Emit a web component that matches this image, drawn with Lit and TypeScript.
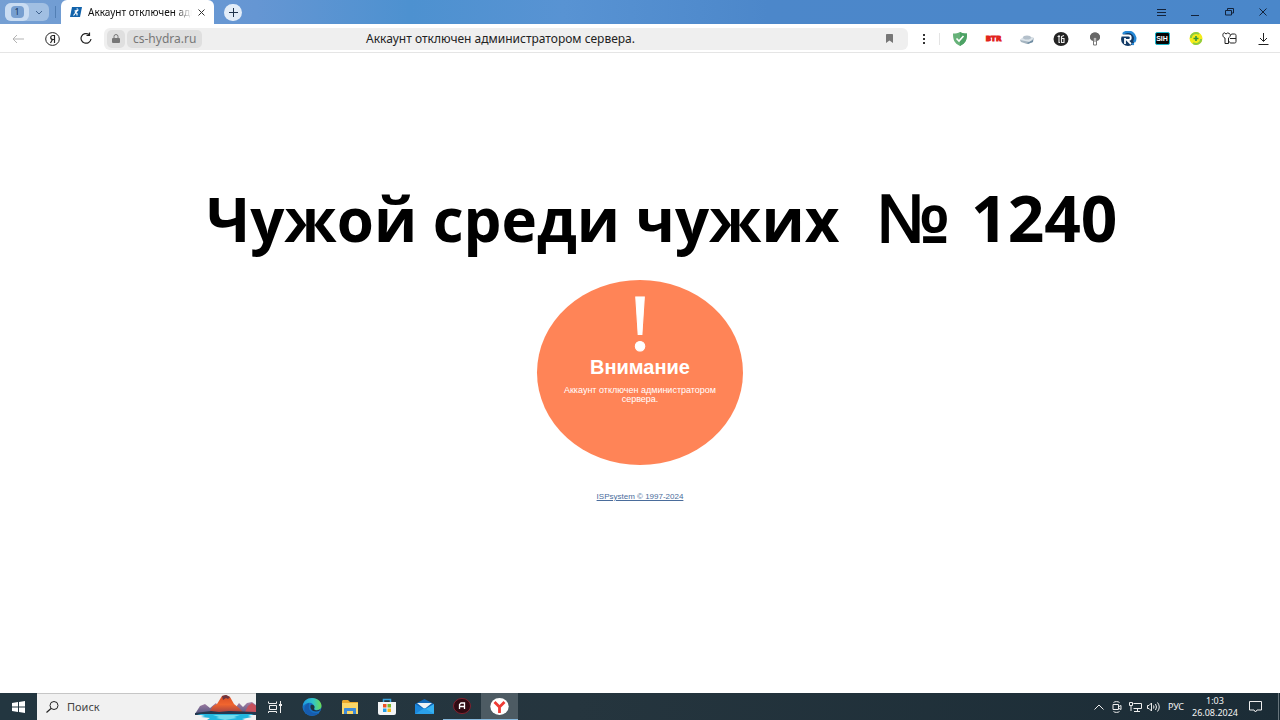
import { LitElement, html, css, svg, type TemplateResult } from "lit";
import { customElement } from "lit/decorators.js";

const icon = (w: number, h: number, body: TemplateResult | ReturnType<typeof svg>) =>
  html`<svg width=${w} height=${h} viewBox="0 0 ${w} ${h}" fill="none" aria-hidden="true">${body}</svg>`;

const reset = css`
  * { box-sizing: border-box; }
  button {
    appearance: none;
    border: 0;
    margin: 0;
    padding: 0;
    background: none;
    color: inherit;
    font: inherit;
    display: flex;
    align-items: center;
    justify-content: center;
  }
  svg { display: block; flex: none; }
`;

@customElement("tab-strip")
class TabStrip extends LitElement {
  static styles = [reset, css`
    :host {
      display: flex;
      height: 24px;
      padding-left: 5px;
      background: linear-gradient(90deg, #759fd3 0%, #6596d3 20%, #4d91d0 32%, #5893d3 44%, #4c87ca 60%, #4a87ca 100%);
      font: 10px/14px "Noto Sans", sans-serif;
      color: #111;
    }
    .group { display: flex; align-items: center; margin: 3px 6px 3px 0; width: 44px; border-radius: 6px; background: #a1bfe2; color: #27496f; }
    .count { width: 24px; height: 18px; border-radius: 6px; background: #c9dcf2; }
    .badge { width: 13px; height: 12px; border-radius: 4px; background: #779fd0; font-size: 9px; line-height: 12px; color: #16365c; }
    .more { flex: 1; height: 18px; }
    .split { width: 1px; height: 12px; margin: 6px 5px 0 0; background: #527fb4; }
    .tab { display: flex; align-items: center; gap: 6px; width: 153px; padding: 0 9px; border-radius: 6px 6px 0 0; background: #fff; }
    .name { flex: 1; min-width: 0; white-space: nowrap; -webkit-mask-image: linear-gradient(90deg, #000 84%, transparent); mask-image: linear-gradient(90deg, #000 84%, transparent); }
    .add { align-self: center; width: 18px; height: 17px; margin-left: 10px; border-radius: 9px; background: #e3edf8; }
    .controls { display: flex; margin-left: auto; }
    .controls button { width: 34px; }
  `];
  render() {
    return html`
      <div class="group">
        <button class="count" aria-label="Вкладки"><span class="badge">1</span></button>
        <button class="more" aria-label="Группы">${icon(8, 5, svg`<path d="M1 1l3 3 3-3" stroke="#41648f"/>`)}</button>
      </div>
      <span class="split"></span>
      <div class="tab">
        ${icon(12, 10, svg`<path d="M2 0h10l-2 10H0z" fill="#1263ab"/><path d="M6.500 2h1.500M4.500 4l3-.5-2 2 1.500 1v2M5.500 6L3.500 8.500" stroke="#fff" stroke-width="1.200"/>`)}
        <span class="name">Аккаунт отключен адм</span>
        <button class="close" aria-label="Закрыть">${icon(7, 7, svg`<path d="M.5.5l6 6M6.500.5l-6 6" stroke="#333"/>`)}</button>
      </div>
      <button class="add" aria-label="Новая вкладка">${icon(9, 9, svg`<path d="M4.500 0v9M0 4.500h9" stroke="#20344c"/>`)}</button>
      <div class="controls">
        <button aria-label="Меню">${icon(9, 7, svg`<path d="M0 .5h9M0 3.500h9M0 6.500h9" stroke="#13233b"/>`)}</button>
        <button aria-label="Свернуть">${icon(8, 8, svg`<path d="M0 7.500h8" stroke="#13233b"/>`)}</button>
        <button aria-label="Окно">${icon(9, 8, svg`<path d="M2.500 2V.5h6v4.500H6.500M.5 2.500h6v4.500h-6z" stroke="#13233b"/>`)}</button>
        <button aria-label="Закрыть окно">${icon(8, 8, svg`<path d="M.5.5l7 7M7.500.5l-7 7" stroke="#13233b"/>`)}</button>
      </div>`;
  }
}

const extensions: [string, TemplateResult][] = [
  ["Защита", icon(16, 14, svg`<path d="M8 0c2 1 4 1.500 7 1.500 0 6-1 9.500-7 12.500C2 11 1 7.500 1 1.500 4 1.500 6 1 8 0z" fill="#67b279"/><path d="M8 0c2 1 4 1.500 7 1.500 0 6-1 9.500-7 12.500z" fill="#4da265"/><path d="M4.500 6.500L7 9l4.500-5" stroke="#fff" stroke-width="1.600"/>`)],
  ["BTR", html`<span class="btr">BTR</span>`],
  ["Диск", icon(16, 11, svg`<path d="M1 7l5-4 9 2-1 4-6 2-6-2z" fill="#a4b4c0"/><path d="M1 7l5-4 9 2-4 4z" fill="#dce4ea"/><ellipse cx="8" cy="4.500" rx="4" ry="2" fill="#b4c0cb"/><path d="M8 10l6-3v2l-5 2z" fill="#6f8da2"/>`)],
  ["Б", icon(16, 14, svg`<ellipse cx="8" cy="7" rx="7.500" ry="7" fill="#242424"/><path d="M4.500 4.500H7M6 3v7.500h1M11 3.500L8.500 4.500v6H11v-4H9" stroke="#eee" stroke-width="1.100"/>`)],
  ["Лампа", icon(12, 14, svg`<path d="M6 .5a5 4.500 0 0 1 3 8L8 9V6H4v3L3 8.500a5 4.500 0 0 1 3-8z" fill="#666"/><path d="M1 5a5 4.500 0 0 1 10 0c0 2-1 3-2 3.500V5H3v3.500C2 8 1 7 1 5z" fill="#666"/><path d="M4.500 6v7h3V6M6 5v5" stroke="#777"/>`)],
  ["R", icon(18, 16, svg`<ellipse cx="9" cy="8" rx="7" ry="7" fill="#123a66"/><path d="M4 3a7 6.500 0 0 1 11 8" stroke="#2488d7" stroke-width="2.500"/><path d="M2 4.500h7.500a2 2 0 0 1 0 4.500H8l4 4M6 7v6" stroke="#fff" stroke-width="1.800"/><circle cx="14" cy="13" r="1.200" fill="#2488d7"/>`)],
  ["SIH", html`<span class="sih">SIH</span>`],
  ["Плюс", icon(14, 13, svg`<ellipse cx="7" cy="6.500" rx="6.500" ry="6.500" fill="#f4ec19"/><path d="M2 6a5 4.500 0 0 1 8-4M12 7a5 4.500 0 0 1-8 4" stroke="#8ccb45" stroke-width="2"/><path d="M7 4v5M4.500 6.500h5" stroke="#33943c" stroke-width="1.600"/>`)],
  ["Расширения", icon(15, 13, svg`<path d="M3 6C.5 5.500 0 1 2.500.8L4 2l1.500-1 1.500.3C9 2 8.500 5 6.500 6v5.500H3zM8.500 3.500L9.500 2h3c1 0 1.500.5 1.500 1.500v6c0 1-.5 1.500-1.500 1.500H9c-1 0-1.500-.5-1.500-1.500M8 6.500h6" stroke="#222"/>`)],
  ["Загрузки", icon(11, 12, svg`<path d="M5.500 0v8M2 5l3.500 3.500L9 5M.5 11.500h10" stroke="#222"/>`)],
];

@customElement("address-bar")
class AddressBar extends LitElement {
  static styles = [reset, css`
    :host {
      display: flex;
      align-items: center;
      height: 29px;
      padding-top: 1px;
      border-bottom: 1px solid #e5e5e5;
      box-sizing: border-box;
      background: #fff;
      font: 12px/16px "Noto Sans", sans-serif;
      color: #222;
    }
    .nav { display: flex; padding-left: 1px; margin-right: 1px; }
    .nav button { width: 34px; height: 24px; }
    .bar { flex: 1; display: grid; grid-template-columns: 1fr auto 1fr; align-items: center; height: 22px; padding: 0 14px 0 3px; border-radius: 6px; background: #efefef; }
    .site { display: flex; gap: 2px; color: #777; }
    .lock, .host { height: 18px; border-radius: 5px; background: #dfdfdf; }
    .lock { width: 18px; }
    .host { padding: 0 6px; }
    .mark { justify-self: end; }
    .dots { width: 31px; height: 24px; }
    .split { width: 1px; height: 12px; margin-right: 3px; background: #e4e4e4; }
    .ext { display: grid; grid-template-columns: repeat(10, 1fr); width: 337px; }
    .ext button { height: 24px; }
    .btr { font: 700 7px/8px "DejaVu Sans", sans-serif; color: #e2231a; -webkit-text-stroke: 1px #e2231a; }
    .sih { width: 15px; height: 13px; border: 1px solid #19b7cb; border-radius: 2px; background: #050505; color: #fff; font: 700 7px/11px "Liberation Sans", sans-serif; text-align: center; }
  `];
  render() {
    return html`
      <nav class="nav">
        <button aria-label="Назад">${icon(12, 10, svg`<path d="M12 5H1M5 1L1 5l4 4" stroke="#b3b3b3"/>`)}</button>
        <button aria-label="Яндекс">${icon(15, 14, svg`<ellipse cx="7.500" cy="7" rx="6.800" ry="6.400" stroke="#222"/><path d="M9.500 11V3.500H8c-3 0-3 4 0 4h1.500M7.500 7.500l-2 3.500" stroke="#222" stroke-width="1.200"/>`)}</button>
        <button aria-label="Обновить">${icon(12, 13, svg`<path d="M9 2.500A5 4.800 0 1 0 11 7M6.500 3.500h3V.5" stroke="#222" stroke-width="1.200"/>`)}</button>
      </nav>
      <div class="bar">
        <div class="site">
          <button class="lock" aria-label="Соединение защищено">${icon(8, 9, svg`<rect y="4" width="8" height="5" rx="1" fill="#777"/><path d="M2 4V2.500a2 2 0 0 1 4 0V4" stroke="#777"/>`)}</button>
          <button class="host">cs-hydra.ru</button>
        </div>
        <span>Аккаунт отключен администратором сервера.</span>
        <button class="mark" aria-label="В закладки">${icon(9, 9, svg`<path d="M1 1c0-.6.4-1 1-1h5c.6 0 1 .4 1 1v8L4.500 6.500 1 9z" fill="#777"/>`)}</button>
      </div>
      <button class="dots" aria-label="Ещё">${icon(2, 10, svg`<path d="M0 0h2v2H0zM0 4h2v2H0zM0 8h2v2H0z" fill="#333"/>`)}</button>
      <span class="split"></span>
      <div class="ext">${extensions.map(([name, art]) => html`<button aria-label=${name}>${art}</button>`)}</div>`;
  }
}

@customElement("suspended-page")
class SuspendedPage extends LitElement {
  static styles = [reset, css`
    :host { display: flex; flex-direction: column; align-items: center; background: #fff; font-family: "Liberation Sans", sans-serif; }
    h1 { margin: 125px 0 0 44px; height: 80px; font: 700 60px/80px "Open Sans", "Noto Sans", sans-serif; color: #000; white-space: pre; }
    .numero { margin: 0 6px; font: 400 68px/80px "Liberation Sans", sans-serif; -webkit-text-stroke: 2px #000; }
    .number { font-size: 64px; }
    .notice { display: flex; flex-direction: column; align-items: center; width: 206px; height: 185px; margin-top: 22px; padding: 10px 20px 0; border-radius: 50%; background: #ff8457; color: #fff; text-align: center; }
    .mark { font: 400 80px/66px "Liberation Serif", serif; -webkit-text-stroke: 1px #fff; }
    h2 { margin: 0; font-size: 20px; line-height: 22px; }
    p { margin: 8px 0 0; font-size: 9px; line-height: 9px; }
    .owner { margin-top: 27px; font-size: 8px; line-height: 10px; color: #4a6c9b; }
  `];
  render() {
    return html`
      <h1>Чужой среди чужих  <span class="numero">№</span> <span class="number">1240</span></h1>
      <section class="notice">
        <span class="mark">!</span>
        <h2>Внимание</h2>
        <p>Аккаунт отключен администратором сервера.</p>
      </section>
      <a class="owner" href="#">ISPsystem © 1997-2024</a>`;
  }
}

const apps: [string, string, TemplateResult][] = [
  ["Представление задач", "", icon(14, 12, svg`<path d="M.5 2V.5M.5 2.500h8V.5M1.500 4.500h7v4h-7zM.5 12v-1.500h8V12M12.500 0v12" stroke="#eee"/><path d="M11 3h3v2h-3z" fill="#eee"/>`)],
  ["Edge", "", icon(20, 18, svg`<defs><linearGradient id="e" x1="0" y1="0" x2="1" y2="0"><stop stop-color="#1f9ae0"/><stop offset=".55" stop-color="#31c5c8"/><stop offset="1" stop-color="#6ddb52"/></linearGradient></defs><ellipse cx="10" cy="9" rx="9.500" ry="9" fill="#1571c6"/><path d="M1 8C1 3 5 0 10 0c6 0 9.500 4 9.500 8 0 3-3 4.500-6 4-2-.5-1-1.500-1-3C12 6 9 4 6 5 3 5.500 1 8 1 8z" fill="url(#e)"/><path d="M7 8c-1 4 3 8 10 7-4 3.500-11 4-14-1C1 9 4 6 7 5z" fill="#175cae"/><path d="M8.500 8c0-2 4-1.500 4 1 0 1-1 2 0 3 2 1 5 0 6-1 0 1-2 2.500-4.500 2.500-4 0-6-3-5.500-5.500z" fill="#20333d"/>`)],
  ["Проводник", "", icon(18, 14, svg`<path d="M1 2c0-1 .5-2 1-2h5l2 2h8v4H1z" fill="#eba92c"/><path d="M1 3h16v11H1z" fill="#fbd667"/><path d="M3 14V9c0-1 .5-1 1-1h10c1 0 1 .5 1 1v5h-3v-3H6v3z" fill="#3f8bd8"/>`)],
  ["Магазин", "", icon(18, 17, svg`<path d="M5.500 4V1.500h7V4" stroke="#3ba4df" stroke-width="1.500"/><path d="M0 4h18v11a2 2 0 0 1-2 2H2a2 2 0 0 1-2-2z" fill="#f3f5f6"/><path d="M5 6h3.500v3.500H5z" fill="#ee5125"/><path d="M9.500 6H13v3.500H9.500z" fill="#7db928"/><path d="M5 10.500h3.500V14H5z" fill="#24a0e8"/><path d="M9.500 10.500H13V14H9.500z" fill="#f8b718"/>`)],
  ["Почта", "", icon(19, 15, svg`<path d="M0 5l9.500-5L19 5v10H0z" fill="#1267b5"/><path d="M2 4h15l-7.500 6z" fill="#eef2f5"/><path d="M0 5l9.500 5.500L0 15z" fill="#1b87dc"/><path d="M19 5l-9.500 5.500L19 15z" fill="#36b1f1"/><path d="M0 15l9.500-6 9.500 6z" fill="#2ba0ea"/>`)],
  ["A", "open", icon(18, 16, svg`<ellipse cx="9" cy="8" rx="8.500" ry="7.600" fill="#300b13" stroke="#81212f"/><path d="M6.500 11V6.500L8 5h3.500v6M6.500 8.500h5" stroke="#fff" stroke-width="1.300"/>`)],
  ["Яндекс Браузер", "open active", icon(19, 17, svg`<ellipse cx="9.500" cy="8.500" rx="9.200" ry="8.400" fill="#fff"/><path d="M4.500 4l5 5 5-5M9.500 8v7" stroke="#ed3b35" stroke-width="2.800"/>`)],
];

@customElement("task-bar")
class TaskBar extends LitElement {
  static styles = [reset, css`
    :host { display: flex; height: 27px; background: linear-gradient(90deg, #233640, #25353e 45%, #1b2c36); color: #f4f4f4; font: 9px/12px "Noto Sans", sans-serif; }
    .start { width: 37px; }
    .search { display: flex; align-items: center; gap: 8px; width: 219px; padding-left: 9px; border-top: 1px solid #c6c6c6; background: #f1f1f1; }
    input { flex: 1; min-width: 0; border: 0; padding: 0; outline: 0; background: none; font: 11px/16px "Noto Sans", sans-serif; color: #444; }
    input::placeholder { color: #444; opacity: 1; }
    .apps { display: grid; grid-template-columns: repeat(7, 1fr); width: 262px; }
    .open { border-bottom: 1px solid #87b9dd; }
    .active { background: #4d5b63; }
    .tray { display: flex; align-items: center; margin-left: auto; }
    .tray button { width: 18px; height: 27px; }
    .tray .lang { width: 28px; }
    .tray .clock { width: 50px; text-align: center; }
    .tray .note { width: 30px; }
    .edge { align-self: stretch; width: 1px; margin: 0 1px 0 8px; background: #67747b; }
  `];
  render() {
    return html`
      <button class="start" aria-label="Пуск">${icon(13, 12, svg`<path d="M0 2l6-1v4.500H0zM7 1l6-1v5.500H7zM0 6.500h6V11l-6-1zM7 6.500h6V12l-6-1z" fill="#fff"/>`)}</button>
      <label class="search">
        ${icon(13, 12, svg`<circle cx="8" cy="4.500" r="4" stroke="#222"/><path d="M5 7.500L.5 11.500" stroke="#222" stroke-width="1.200"/>`)}
        <input type="text" placeholder="Поиск" aria-label="Поиск" />
        ${icon(61, 25, svg`
          <defs><linearGradient id="m" x1="0" y1="0" x2="0" y2="1"><stop stop-color="#d84b22"/><stop offset=".5" stop-color="#f0652f"/><stop offset="1" stop-color="#963c46"/></linearGradient>
          <linearGradient id="n" x1="0" y1="0" x2="0" y2="1"><stop stop-color="#a981a6"/><stop offset="1" stop-color="#535680"/></linearGradient></defs>
          <path d="M0 19l5-8 5-2 5 4 6-5 7 11zM36 19l8-11 4 4 4-4 5-1 4 3v9z" fill="url(#n)"/>
          <path d="M13 19l5-8 4-2 5-8 4-1 4 2 4 7 5 4 6 6z" fill="url(#m)"/>
          <path d="M27 1l4-1 4 2-2 2-2-1-3 2z" fill="#6c3641"/>
          <path d="M49 19l4-8 4-3 4 3v8z" fill="#c8505b"/>
          <path d="M0 18l16-2 8 1 10-1 27 1v3H0z" fill="#24384f"/>
          <path d="M2 19h57l-6 2 4 1-10 2 3 1H12l3-2-9-1 4-1z" fill="#23b6df"/>
          <path d="M18 20h27l-6 2 3 1-12 2-9-2 3-1z" fill="#72dcec"/>`)}
      </label>
      <nav class="apps">${apps.map(([name, state, art]) => html`<button class=${state} aria-label=${name}>${art}</button>`)}</nav>
      <div class="tray">
        <button aria-label="Значки">${icon(10, 6, svg`<path d="M.5 5.500L5 1l4.500 4.500" stroke="#eee"/>`)}</button>
        <button aria-label="Камера">${icon(10, 12, svg`<path d="M1.500 1.500C3 .3 6 .3 7.500 1.500M1.500 10.500c1.500 1.200 4.500 1.200 6 0M1 3.500h5.500v5H1zM7 5.500l2-1v4l-2-1" stroke="#eee"/>`)}</button>
        <button aria-label="Сеть">${icon(13, 10, svg`<path d="M4.500 1.500h8v5h-8M8.500 7v2.500M5 9.500h6M.5.5h3v3h-3zM2 4v5" stroke="#eee"/>`)}</button>
        <button aria-label="Звук">${icon(13, 10, svg`<path d="M.5 3.500H2l2.500-2.500v8L2 6.500H.5zM6.500 3.500q1 1.500 0 3M8.500 2q2 3 0 6M10.500.5q3.500 4.500 0 9" stroke="#eee"/>`)}</button>
        <button class="lang">РУС</button>
        <button class="clock">1:03<br />26.08.2024</button>
        <button class="note" aria-label="Уведомления">${icon(13, 12, svg`<path d="M.5.5h12v8.500H8L6.500 11 5 9H.5z" stroke="#eee"/>`)}</button>
        <span class="edge"></span>
      </div>`;
  }
}

@customElement("app-root")
class AppRoot extends LitElement {
  static styles = css`
    :host { display: flex; flex-direction: column; min-height: 100vh; overflow: hidden; background: #fff; }
    suspended-page { flex: 1; }
  `;
  render() {
    return html`<tab-strip></tab-strip><address-bar></address-bar><suspended-page></suspended-page><task-bar></task-bar>`;
  }
}
